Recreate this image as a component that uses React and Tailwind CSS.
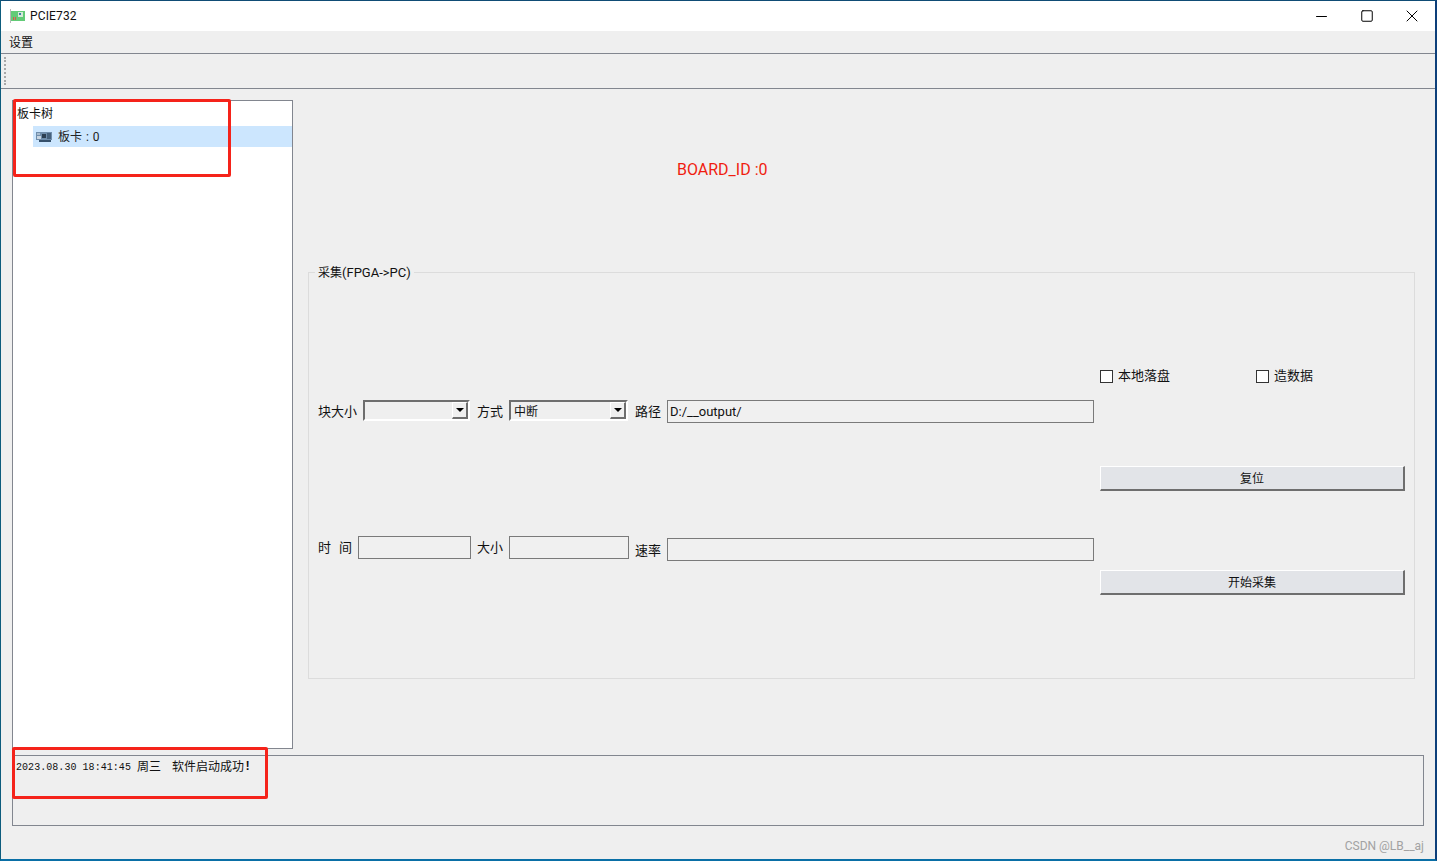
import { Minus, Square, X } from 'lucide-react'

const ui = "font-['Roboto','Noto_Sans_CJK_SC',sans-serif]"

function BoardIcon({ className }) {
  return (
    <svg viewBox="0 0 16 12" className={className}>
      <rect x="0" y="1" width="16" height="8" fill="#6f8dab" />
      <rect x="1" y="2" width="3" height="2" fill="#a9bdd0" />
      <rect x="1" y="5" width="4" height="3" fill="#c8d5e1" />
      <rect x="6" y="3" width="4" height="4" fill="#2c3f52" />
      <rect x="11" y="2" width="4" height="6" fill="#46617c" />
      <rect x="3" y="9" width="12" height="2" fill="#35506b" />
    </svg>
  )
}

function AppIcon() {
  return (
    <svg viewBox="0 0 15 14" className="w-[15px] h-[14px] shrink-0">
      <rect x="0" y="0" width="1" height="14" fill="#b8b8b8" />
      <rect x="1" y="2" width="14" height="10" fill="#62cb77" />
      <rect x="8" y="3" width="5" height="5" fill="#d5e8d8" />
      <rect x="9" y="4" width="2" height="2" fill="#3b7fa5" />
      <rect x="3" y="8" width="1" height="3" fill="#d9534f" />
      <rect x="5" y="8" width="1" height="3" fill="#d9534f" />
    </svg>
  )
}

function Combo({ width, value }) {
  return (
    <div className={`${width} h-[21px] flex justify-between bg-[#efefef] border-2 border-t-[#6e6e6e] border-l-[#6e6e6e] border-r-white border-b-white`}>
      <span className="pl-[3px] text-[12px] leading-[21px] text-[#111]">{value}</span>
      <span className="w-[16px] h-[17px] flex items-center justify-center bg-[#efefef] border-r-2 border-b-2 border-r-[#6e6e6e] border-b-[#6e6e6e] border-l border-t border-l-white border-t-white">
        <span className="w-0 h-0 border-x-[4px] border-x-transparent border-t-[4px] border-t-black" />
      </span>
    </div>
  )
}

function Field({ width, value, className = '' }) {
  return (
    <div className={`${width} h-[23px] border border-[#7a7a7a] bg-[#f0f0f0] pl-[2px] text-[13px] leading-[22px] text-[#111] ${className}`}>
      {value}
    </div>
  )
}

function Check({ label, width }) {
  return (
    <label className={`${width} flex items-center gap-[5px] text-[13px] leading-[14px] text-[#111]`}>
      <span className="w-[13px] h-[13px] border border-[#333] bg-white" />
      {label}
    </label>
  )
}

function PushButton({ label, className = '' }) {
  return (
    <button className={`w-[305px] h-[25px] pt-[2px] bg-[#e2e4e8] border border-white border-r-2 border-b-2 border-r-[#6e6e6e] border-b-[#6e6e6e] text-[12px] text-[#111] ${className}`}>
      {label}
    </button>
  )
}

export default function App() {
  return (
    <div className={`relative w-[1437px] h-[861px] flex flex-col overflow-hidden bg-[#efefef] border-t border-l border-r-2 border-b-2 border-t-[#0f4c75] border-l-[#0d5c7d] border-r-[#0d3f7a] border-b-[#0a6fa6] ${ui}`}>
      <div className="h-[30px] shrink-0 bg-white flex items-center pl-[9px] gap-[5px]">
        <AppIcon />
        <span className="text-[12px] tracking-[0.15px] text-[#111]">PCIE732</span>
        <div className="ml-auto flex items-center text-black">
          <span className="w-[45px] flex justify-center"><Minus size={17} strokeWidth={1.5} /></span>
          <span className="w-[45px] flex justify-center"><Square size={14} strokeWidth={1.7} /></span>
          <span className="w-[46px] flex justify-center"><X size={20} strokeWidth={1.2} /></span>
        </div>
      </div>

      <div className="h-[22px] shrink-0 pl-[8px] text-[12px] leading-[24px] text-[#111]">设置</div>

      <div className="h-[36px] shrink-0 border-y border-[#82868f] pl-[3px] pt-[3px]">
        <div className="w-[2px] h-[28px] border-l-2 border-dotted border-[#a8a8a8]" />
      </div>

      <div className="flex pl-[11px] pt-[11px]">
        <div className="w-[281px] h-[649px] shrink-0 border border-[#82868f] bg-white pt-[5px]">
          <div className="pl-[4px] text-[12px] leading-[16px] text-[#111]">板卡树</div>
          <div className="ml-[20px] mt-[4px] h-[21px] bg-[#cce6fe] flex items-center pl-[3px] gap-[6px] text-[12px] text-[#222] [word-spacing:1px]">
            <BoardIcon className="w-[16px] h-[12px]" />
            板卡 : 0
          </div>
        </div>

        <div className="ml-[15px] w-[1107px] shrink-0">
          <div className="h-[139px] pt-[60px] pl-[369px] text-[16px] leading-[20px] text-[#f01d0f]">BOARD_ID :0</div>

          <div className="relative mt-[33px] h-[407px] border border-[#dcdcdc] flex">
            <span className="absolute left-[6px] top-[-8px] px-[3px] bg-[#efefef] text-[12px] leading-[16px] text-[#111]">采集<span className="text-[13px]">(FPGA-&gt;PC)</span></span>

            <div className="w-[785px] shrink-0 pl-[9px] text-[13px] text-[#111]">
              <div className="mt-[127px] flex items-start h-[23px]">
                <span className="w-[45px] leading-[24px]">块大小</span>
                <Combo width="w-[107px]" value="" />
                <span className="ml-[7px] w-[32px] leading-[24px]">方式</span>
                <Combo width="w-[119px]" value="中断" />
                <span className="ml-[7px] w-[32px] leading-[24px]">路径</span>
                <Field width="w-[427px]" value="D:/__output/" />
              </div>
              <div className="mt-[113px] flex items-start h-[25px]">
                <span className="w-[40px] flex gap-[8px] leading-[24px]"><span>时</span><span>间</span></span>
                <Field width="w-[113px]" value="" />
                <span className="ml-[6px] w-[32px] leading-[24px]">大小</span>
                <Field width="w-[120px]" value="" />
                <span className="ml-[6px] w-[32px] mt-[2px] leading-[26px]">速率</span>
                <Field width="w-[427px]" value="" className="mt-[2px]" />
              </div>
            </div>

            <div className="flex-1 pl-[6px]">
              <div className="mt-[96px] flex">
                <Check label="本地落盘" width="w-[156px]" />
                <Check label="造数据" />
              </div>
              <PushButton label="复位" className="block mt-[83px]" />
              <PushButton label="开始采集" className="block mt-[79px]" />
            </div>
          </div>
        </div>
      </div>

      <div className="ml-[11px] mt-[6px] w-[1412px] h-[71px] shrink-0 border border-[#82868f] pl-[3px] pt-[3px] flex items-start text-[#111]">
        <span className="font-['Liberation_Mono',monospace] text-[10px] tracking-[0.05px] leading-[17px]">2023.08.30 18:41:45</span>
        <span className="ml-[6px] text-[12px] leading-[17px]">周三</span>
        <span className="ml-[11px] text-[12px] leading-[17px]">软件启动成功</span>
        <span className="font-['Liberation_Mono',monospace] font-bold text-[12px] leading-[17px]">!</span>
      </div>

      <div className="absolute right-[11px] bottom-[6px] text-[12px] leading-[14px] text-[#a2a2a2]">CSDN @LB__aj</div>

      <div className="absolute left-[12px] top-[98px] w-[218px] h-[78px] border-[3px] border-[#f5231a] rounded-[2px]" />
      <div className="absolute left-[11px] top-[746px] w-[256px] h-[52px] border-[3px] border-[#f5231a] rounded-[2px]" />
    </div>
  )
}
